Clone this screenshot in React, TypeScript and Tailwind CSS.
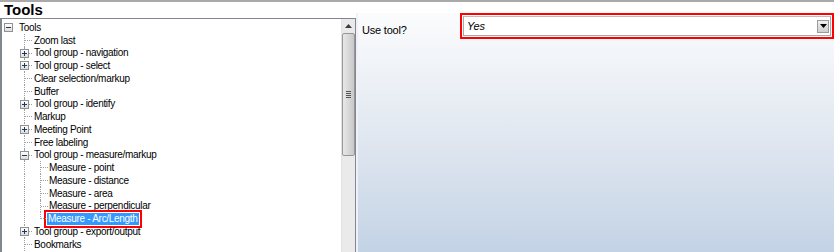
import React from "react";

type Node = {
  label: string;
  children?: Node[];
  expanded?: boolean;
  selected?: boolean;
};

const tree: Node = {
  label: "Tools",
  expanded: true,
  children: [
    { label: "Zoom last" },
    { label: "Tool group - navigation", children: [] },
    { label: "Tool group - select", children: [] },
    { label: "Clear selection/markup" },
    { label: "Buffer" },
    { label: "Tool group - identify", children: [] },
    { label: "Markup" },
    { label: "Meeting Point", children: [] },
    { label: "Free labeling" },
    {
      label: "Tool group - measure/markup",
      expanded: true,
      children: [
        { label: "Measure - point" },
        { label: "Measure - distance" },
        { label: "Measure - area" },
        { label: "Measure - perpendicular" },
        { label: "Measure - Arc/Length", selected: true },
      ],
    },
    { label: "Tool group - export/output", children: [] },
    { label: "Bookmarks" },
  ],
};

function Expander({ open }: { open: boolean }) {
  return (
    <span className="relative z-10 flex h-[9px] w-[9px] items-center justify-center border border-[#919191] bg-gradient-to-b from-white to-[#dcdcdc]">
      <span className="absolute h-px w-[5px] bg-[#1e395b]" />
      {!open && <span className="absolute h-[5px] w-px bg-[#1e395b]" />}
    </span>
  );
}

// one indent column of the tree: vertical pass-through line, or a connector to the item
function Guide({ through, last, branch, box, open, first }: { through?: boolean; last?: boolean; branch?: boolean; box?: boolean; open?: boolean; first?: boolean }) {
  return (
    <span className={`relative h-full shrink-0 ${first ? "w-[14px]" : "w-[16px]"}`}>
      {(through || branch) && (
        <span
          className={`absolute left-[8px] top-0 w-0 border-l border-dotted border-[#a0a0a0] ${
            last ? "h-[7px]" : "h-full"
          }`}
        />
      )}
      {branch && (
        <span className="absolute left-[9px] top-[6px] h-0 w-[7px] border-t border-dotted border-[#a0a0a0]" />
      )}
      {box && (
        <span className={`absolute top-[2px] ${first ? "left-[2px]" : "left-[4px]"}`}>
          <Expander open={!!open} />
        </span>
      )}
    </span>
  );
}

function Row({ node, guides, textPad }: { node: Node; guides: React.ReactNode; textPad: string }) {
  return (
    <div className="flex h-[12.75px] items-center whitespace-nowrap">
      {guides}
      {node.selected ? (
        <span className="ml-[-4px]">
          <span className="inline-block border-2 border-[#ff0000] p-px leading-none">
            <span className="inline-block bg-[#3399ff] px-[1px] py-px leading-[10px] text-white">{node.label}</span>
          </span>
        </span>
      ) : (
        <span className={textPad}>{node.label}</span>
      )}
    </div>
  );
}

function TreeView() {
  const kids = tree.children ?? [];
  const rows: React.ReactNode[] = [];
  rows.push(<Row key="root" node={tree} textPad="pl-[3px]" guides={<Guide first box open />} />);
  kids.forEach((k) => {
    rows.push(
      <Row
        key={k.label}
        node={k}
        textPad="pl-[2px]"
        guides={
          <>
            <span className="w-[14px] shrink-0" />
            <Guide branch box={!!k.children} open={k.expanded} />
          </>
        }
      />
    );
    if (k.expanded && k.children) {
      k.children.forEach((g, j) => {
        rows.push(
          <Row
            key={g.label}
            node={g}
            textPad="pl-[1px]"
            guides={
              <>
                <span className="w-[14px] shrink-0" />
                <Guide through />
                <Guide branch last={j === k.children!.length - 1} />
              </>
            }
          />
        );
      });
    }
  });
  return <div className="pt-[1px]">{rows}</div>;
}

function ScrollBar() {
  return (
    <div className="flex h-full w-[14px] shrink-0 flex-col border-l border-[#e3e3e3] bg-[#eaeaea]">
      <div className="flex h-[14px] items-center justify-center">
        <svg width="7" height="4" viewBox="0 0 7 4">
          <path d="M3.5 0 L7 4 L0 4 Z" fill="#3c3c3c" />
        </svg>
      </div>
      <div className="flex h-[123px] items-center justify-center rounded-[2px] border border-[#979797] bg-gradient-to-r from-[#e8e8e8] via-[#d8d8d8] to-[#c8c8c8]">
        <div className="flex flex-col gap-px">
          <span className="h-px w-[5px] bg-[#555]" />
          <span className="h-px w-[5px] bg-[#555]" />
          <span className="h-px w-[5px] bg-[#555]" />
          <span className="h-px w-[5px] bg-[#555]" />
        </div>
      </div>
      <div className="flex-1" />
    </div>
  );
}

export default function App() {
  return (
    <div
      className="flex h-[252px] w-[834px] flex-col overflow-hidden border-t-2 border-[#a9a9a9] bg-white text-[10px] tracking-[-0.3px] text-black"
      style={{ fontFamily: '"Liberation Sans", Arial, sans-serif' }}
    >
      <div className="h-[16px] pl-[4px] text-[15px] font-bold leading-[16px] tracking-normal">Tools</div>
      <div className="flex min-h-0 flex-1">
        <div className="flex w-[356px] shrink-0 overflow-hidden border-l-2 border-r border-t border-[#828790]">
          <div className="flex-1 overflow-hidden pt-[1px]">
            <TreeView />
          </div>
          <ScrollBar />
        </div>
        <div className="-mt-[5px] flex-1 border-l-2 border-[#eef2f8] bg-gradient-to-b from-[#fbfcfd] via-[#e2e8f1] to-[#c3d3e5]">
          <div className="flex items-start pl-[4px]">
            <span className="mt-[9px] w-[98px] text-[11px] tracking-[-0.2px]">Use tool?</span>
            <div className="w-[374px] border-2 border-[#ff0000] p-[1px]">
              <div className="flex h-[20px] items-center justify-between border border-[#a9a9a9] border-t-[#bdbdbd] bg-white pl-[3px] pr-[1px]">
                <span className="text-[11px] italic tracking-[-0.2px]">Yes</span>
                <span className="flex h-[13px] w-[12px] items-center justify-center border border-[#9a9a9a] bg-gradient-to-b from-[#f2f2f2] to-[#cfcfcf]">
                  <svg width="7" height="4" viewBox="0 0 7 4">
                    <path d="M0 0 L7 0 L3.5 4 Z" fill="#000" />
                  </svg>
                </span>
              </div>
            </div>
          </div>
        </div>
      </div>
    </div>
  );
}
